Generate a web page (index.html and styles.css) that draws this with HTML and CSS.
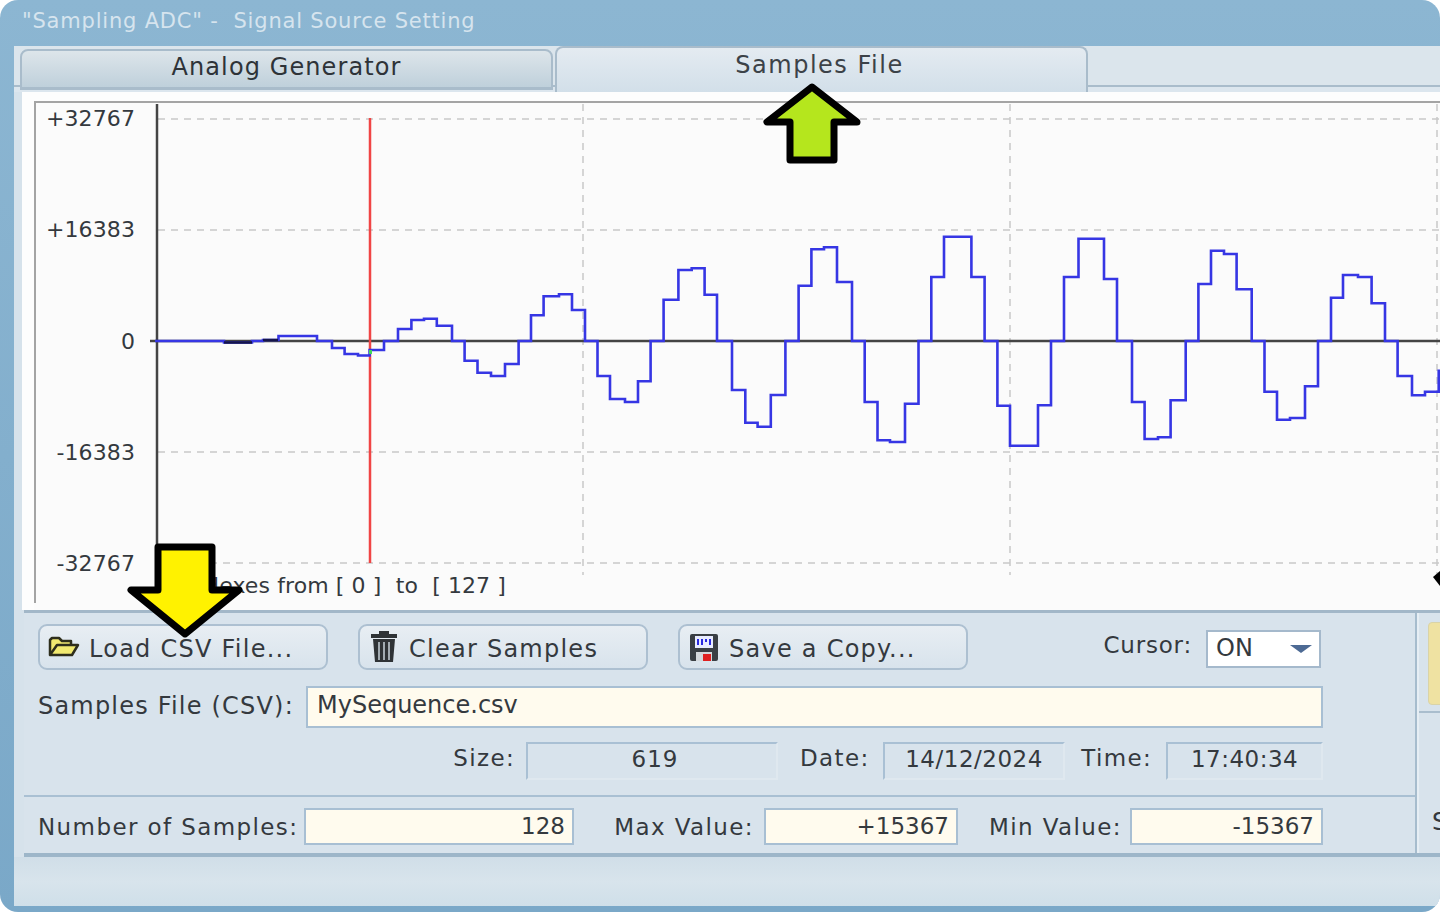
FILE: index.html
```html
<!doctype html>
<html>
<head>
<meta charset="utf-8">
<title>Signal Source Setting</title>
<link rel="stylesheet" href="styles.css">
</head>

<body>
<div class="window">
	<div class="title_bar">"Sampling ADC" -&nbsp; Signal Source Setting</div>
	<div class="client">
		<div class="tab_row">
			<div class="tab">Analog Generator</div>
			<div class="tab tab_on">Samples File</div>
		</div>
		<div class="pane">
			<svg class="chart" viewBox="34 101 1406 509" width="1406" height="509">
				<path class="edge" d="M35 603V102H1440"/>
				<path class="grid" d="M158 119H1440M158 230H1440M158 452H1440M158 563H1440"/>
				<path class="grid" d="M583 104V575M1010 104V575M1437 104V575"/>
				<path class="axis" d="M157 104V565M150 341H1440"/>
				<path class="cursor_line" d="M370 118V563"/>
				<path class="trace" d="M155 341H224V342.5H252V341H263V340H278.5V336H317V341H332V348H344.6V354H358V355.5H369.6V350H384V341H398V329H411.4V320H424V318.7H436.8V325.7H452V341H464.6V360.7H477.5V372.7H491V376H505V364H518.6V341H531V315.3H543.6V296.3H559V294.3H572V310H585V341H597.5V376H610V399H625V402H638V381.3H650.6V341H663.6V299.7H678.4V270H691.7V268.3H704.6V294.7H717V341H732V390H745.3V422.7H757.6V426.7H770.8V395H785.4V341H798.6V285.7H811.4V249.3H824V247.3H837V282H852V341H864.7V402H877.5V440.3H890V442H905V403.7H918.5V341H931.3V277H944V236.7H971.4V277H984.6V341H997.4V405.7H1010V445.7H1038V405.3H1051V341H1064V277H1078.5V238.7H1104V279H1117V341H1132V402H1144.6V439H1158V437.3H1170.6V400.3H1185.7V341H1198.4V284H1211V250.7H1224V254H1236.6V289.3H1251.7V341H1264.5V391.7H1277V419.7H1290V418H1305V386.3H1318V341H1331V297.7H1343V275H1358V277H1371.6V303.3H1385V341H1397.6V376H1412V395.3H1425V391.7H1438.7V370.7H1440"/>
				<path class="trace_dark" d="M224 342.5H252M263 340H278"/>
				<rect class="cursor_dot" x="369" y="350" width="3" height="4"/>
				<text class="tick" x="135" y="126">+32767</text>
				<text class="tick" x="135" y="237">+16383</text>
				<text class="tick" x="135" y="349">0</text>
				<text class="tick" x="135" y="460">-16383</text>
				<text class="tick" x="135" y="571">-32767</text>
				<text class="tick" x="506" y="593">Indexes from [ 0 ]&#160; to&#160; [ 127 ]</text>
			</svg>
		</div>
		<div class="panel">
			<div class="panel_left">
				<div class="top_part">
					<div class="row row_btn">
						<div class="btn">
							<svg class="ico" viewBox="0 0 32 24" width="32" height="24"><path class="ico_folder" d="M2 20V5L4 3H11L14 6H23V10H9L2 20H24L30 10H9"/></svg>
							<span>Load CSV File...</span>
						</div>
						<div class="btn">
							<svg class="ico" viewBox="0 0 32 32" width="32" height="32"><path fill="#2f3336" d="M11 0H21V3H29V7H3V3H11ZM5 8H27L25 31H7Z"/><path stroke="#c9d3da" stroke-width="1.5" d="M11 11V29M16 11V29M21 11V29"/></svg>
							<span>Clear Samples</span>
						</div>
						<div class="btn">
							<svg class="ico" viewBox="0 0 32 32" width="32" height="32"><rect x="2" y="3" width="28" height="27" rx="2" fill="#3a3f44"/><rect x="7" y="5" width="18" height="12" fill="#e8ecff"/><path stroke="#2a2ae0" stroke-width="2" d="M10 8V14M14 8V14M18 8V11M22 8V14"/><rect x="8" y="21" width="16" height="9" fill="#d4d8dc"/><rect x="15" y="23" width="8" height="7" fill="#e02020"/></svg>
							<span>Save a Copy...</span>
						</div>
						<div class="cursor_box">
							<span class="cursor_lbl">Cursor:</span>
							<div class="select">ON<i class="caret"></i></div>
						</div>
					</div>
					<div class="row row_file">
						<span class="lbl_file">Samples File (CSV):</span>
						<div class="field field_name">MySequence.csv</div>
					</div>
					<div class="row row_info">
						<span class="lbl lbl_size">Size:</span>
						<div class="ro ro_size">619</div>
						<span class="lbl lbl_date">Date:</span>
						<div class="ro ro_date">14/12/2024</div>
						<span class="lbl lbl_time">Time:</span>
						<div class="ro ro_time">17:40:34</div>
					</div>
				</div>
				<div class="row row_stat">
					<span class="lbl lbl_num">Number of Samples:</span>
					<div class="field num_count">128</div>
					<span class="lbl lbl_max">Max Value:</span>
					<div class="field num_max">+15367</div>
					<span class="lbl lbl_min">Min Value:</span>
					<div class="field num_min">-15367</div>
				</div>
			</div>
			<div class="panel_right">
				<div class="right_top"><div class="yellow_box"></div></div>
				<div class="right_bot">S</div>
			</div>
		</div>
		<div class="status_bar"></div>
	</div>
	<svg class="marks" viewBox="0 0 1440 912" width="1440" height="912">
		<path class="mark mark_green" d="M812 87L767 122H790V160H834V122H857Z"/>
		<path class="mark mark_yellow" d="M158 547H212V590H239L185 634L131 590H158Z"/>
		<path class="mark_tip" d="M1433 577L1440 571V586Z"/>
	</svg>
</div>
</body>
</html>
```

FILE: styles.css
```css
*{margin:0; padding:0; box-sizing:border-box;}
body{background:#fff; font-family:"DejaVu Sans","Liberation Sans",sans-serif; color:#34393e; font-size:24px; overflow:hidden;}

.window{position:relative; width:1440px; height:912px; border-radius:18px; overflow:hidden; background:linear-gradient(#8cb6d2,#7aa8c8); display:flex; flex-direction:column;}
.title_bar{height:46px; line-height:42px; padding-left:22px; font-size:21px; letter-spacing:.8px; color:#d6e4ee; white-space:nowrap;}
.client{flex:1; margin:0 0 6px 14px; background:#d6e2eb; display:flex; flex-direction:column; min-height:0;}

.tab_row{height:46px; display:flex; padding-left:6px; background:linear-gradient(#dbe5ec 0,#dbe5ec 39px,#a9bccb 39px,#a9bccb 41px,#dce6ee 41px); letter-spacing:1.1px;}
.tab{width:533px; height:41px; margin-top:3px; border:2px solid #a9bccb; border-bottom-width:3px; border-radius:8px 8px 0 0; background:linear-gradient(#dde5ea,#bfd0db); text-align:center; line-height:32px; color:#2e3338;}
.tab_on{width:533px; height:46px; margin:0 0 0 2px; padding-right:4px; border-bottom:0; background:linear-gradient(#e4ebf1,#d2dfe9); letter-spacing:1.5px; line-height:34px; color:#3c4248;}

.pane{height:518px; margin-left:8px; padding:9px 0 0 12px; background:#fdfdfd;}
.chart{display:block; background:#fbfbfb;}
.chart path{fill:none;}
.edge{stroke:#a4a4a4; stroke-width:2;}
.grid{stroke:#c9c9c9; stroke-width:1.5; stroke-dasharray:7 6;}
.axis{stroke:#444; stroke-width:2.5;}
.cursor_line{stroke:#f04545; stroke-width:2.5;}
.trace{stroke:#3636e4; stroke-width:2.6;}
.trace_dark{stroke:#15154a; stroke-width:2.5;}
.cursor_dot{fill:#3fd65a;}
.tick{font-size:22px; fill:#34393e; text-anchor:end; letter-spacing:.1px;}

.panel{height:247px; margin-left:10px; display:flex; border-top:3px solid #a2b7c8; border-bottom:4px solid #9db6c9; background:#d8e3ec;}
.panel_left{width:1393px; border-right:2px solid #a6bccd;}
.panel_right{flex:1; border-left:2px solid #e6eef4; overflow:hidden;}
.right_top{height:100px; padding:9px 0 8px 9px; border-bottom:2px solid #a9bdcd;}
.yellow_box{width:30px; height:83px; border-radius:4px; background:#efe2a2; border:1px solid #d9d3a8;}
.right_bot{padding:95px 0 0 13px; color:#34393e;}

.top_part{height:184px; padding:11px 92px 0 14px; border-bottom:2px solid #a9c0d3;}
.row{display:flex; align-items:center; white-space:nowrap;}
.row_btn{height:46px; gap:30px;}
.btn{width:290px; height:46px; padding-left:8px; display:flex; align-items:center; gap:9px; border:2px solid #adc0d1; border-radius:9px; background:linear-gradient(#e8eef3,#d8e3ec); font-size:24px; letter-spacing:1.25px;}
.btn span{padding-top:3px;}
.ico{flex:none;}
.ico_folder{fill:#f2ea70; stroke:#2e2e1c; stroke-width:2.5; stroke-linejoin:round;}
.cursor_box{margin:0 2px 0 auto; display:flex; align-items:center; gap:14px;}
.cursor_lbl{font-size:23px; margin-bottom:4px; letter-spacing:.8px;}
.select{position:relative; width:115px; height:38px; margin-top:4px; padding-left:8px; line-height:33px; background:#fff; border:2px solid #a5b9cc;}
.caret{position:absolute; right:7px; top:13px; border:11px solid transparent; border-top:8px solid #4d6a94; border-bottom:0;}

.row_file{margin-top:16px; height:42px;}
.lbl_file{width:268px; margin-bottom:3px; letter-spacing:1.2px;}
.field{height:100%; background:#fffbee; border:2px solid #a8bfd3;}
.field_name{flex:1; padding-left:9px; line-height:35px;}

.row_info{margin-top:14px; height:38px; font-size:23px;}
.lbl{text-align:right; font-size:23px;}
.ro{height:38px; line-height:30px; text-align:center; border:2px solid #dfe8ef; border-top-color:#a9c0d4; border-left-color:#a9c0d4; letter-spacing:.5px;}
.row_info .lbl{margin-bottom:6px; letter-spacing:1.4px;}
.lbl_size{width:478px; margin-right:11px;}
.ro_size{width:252px; padding-left:6px; letter-spacing:1px;}
.lbl_date{width:92px; margin-right:13px;}
.ro_date{width:183px;}
.lbl_time{width:87px; margin-right:14px;}
.ro_time{width:157px;}

.row_stat{height:37px; margin-top:11px; padding-left:14px; font-size:23px;}
.row_stat .lbl{letter-spacing:1.4px;}
.row_stat .field{line-height:33px; text-align:right; padding-right:7px;}
.lbl_num{width:260px; margin-right:6px; text-align:left;}
.num_count{width:270px;}
.lbl_max{width:180px; margin-right:10px;}
.num_max{width:194px;}
.lbl_min{width:164px; margin-right:8px;}
.num_min{width:193px;}

.status_bar{flex:1; background:linear-gradient(#d0dee8,#d8e4ec 50%,#cfdfe9);}

.marks{position:absolute; left:0; top:0; pointer-events:none;}
.mark{stroke:#000; stroke-width:7; stroke-linejoin:round;}
.mark_green{fill:#b5e61d;}
.mark_yellow{fill:#fff200;}
.mark_tip{fill:#000;}
```
